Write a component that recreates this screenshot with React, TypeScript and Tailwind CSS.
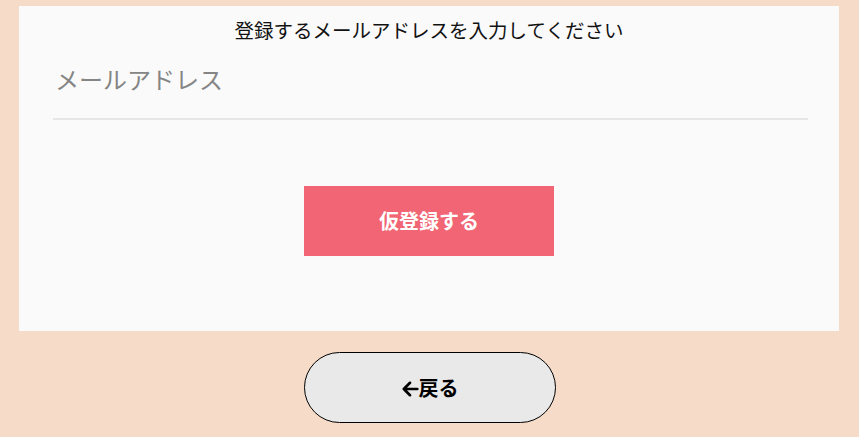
export default function App() {
  return (
    <div
      className="min-h-[437px] w-full bg-[#f5dbc8] pt-[6px]"
      style={{ fontFamily: '"Noto Sans CJK JP", "Noto Sans", sans-serif' }}
    >
      <div className="mx-[19px] h-[325px] w-[820px] bg-[#fafafa] pt-[13px]">
        <p className="text-center text-[19.5px] leading-[22px] text-[#111]">
          登録するメールアドレスを入力してください
        </p>
        <div className="ml-[34px] mr-[31px] mt-[24px] border-b-2 border-[#e6e6e6] pb-[24px]">
          <input
            type="email"
            placeholder="メールアドレス"
            className="w-full bg-transparent pl-[2px] text-[24px] leading-[28px] text-[#333] outline-none placeholder:text-[#858585]"
          />
        </div>
        <div className="mt-[66px] flex justify-center">
          <button className="h-[70px] w-[250px] bg-[#f16574] text-[20px] font-bold text-white">
            仮登録する
          </button>
        </div>
      </div>
      <div className="mt-[21px] flex justify-center">
        <button className="flex h-[71px] w-[252px] items-center justify-center rounded-full border border-black bg-[#e9e9e9] text-[20px] font-bold text-black">
          <svg width="18" height="18" viewBox="0 0 16 16" fill="none" stroke="currentColor" strokeWidth="2.4" strokeLinecap="round" strokeLinejoin="round" className="mt-[3px]">
            <path d="M14.5 8H2.5M8 2.5L2.5 8l5.5 5.5" />
          </svg>
          戻る
        </button>
      </div>
    </div>
  )
}
